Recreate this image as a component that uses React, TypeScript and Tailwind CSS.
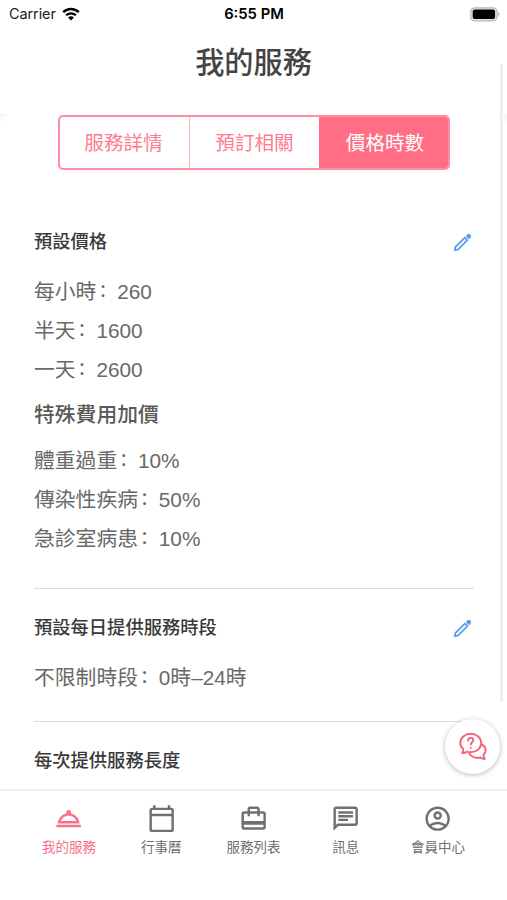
import { useState, type ReactNode } from "react";

interface TabItem {
  readonly label: string;
  readonly path: string;
}

const SEGMENTS = [
  { name: "服務詳情", cell: "w-[129px] pr-[2px]" },
  { name: "預訂相關", cell: "w-[130px] border-l" },
  { name: "價格時數", cell: "flex-1 pl-[3px]" },
];

const TABS: TabItem[] = [
  {
    label: "我的服務",
    path: "M2 17h20v2H2zm11.84-9.21c.1-.24.16-.51.16-.79 0-1.1-.9-2-2-2s-2 .9-2 2c0 .28.06.55.16.79C6.25 8.6 3.27 11.93 3 16h18c-.27-4.07-3.25-7.4-7.16-8.21zM12 9.58c2.95 0 5.47 1.83 6.5 4.41h-13c1.03-2.58 3.55-4.41 6.5-4.41z",
  },
  {
    label: "行事曆",
    path: "M20 3h-1V1h-2v2H7V1H5v2H4c-1.1 0-2 .9-2 2v16c0 1.1.9 2 2 2h16c1.1 0 2-.9 2-2V5c0-1.1-.9-2-2-2zm0 18H4V10h16v11zm0-13H4V5h16v3z",
  },
  {
    label: "服務列表",
    path: "M20 6h-3V4c0-1.11-.89-2-2-2H9c-1.11 0-2 .89-2 2v2H4c-1.11 0-2 .89-2 2v11c0 1.11.89 2 2 2h16c1.11 0 2-.89 2-2V8c0-1.11-.89-2-2-2zM9 4h6v2H9V4zm11 15H4v-2h16v2zm0-5H4V8h3v2h2V8h6v2h2V8h3v6z",
  },
  {
    label: "訊息",
    path: "M4 4h16v12H5.17L4 17.17V4m0-2c-1.1 0-1.99.9-1.99 2L2 22l4-4h14c1.1 0 2-.9 2-2V4c0-1.1-.9-2-2-2H4zm2 10h8v2H6v-2zm0-3h12v2H6V9zm0-3h12v2H6V6z",
  },
  {
    label: "會員中心",
    path: "M12 2C6.48 2 2 6.48 2 12s4.48 10 10 10 10-4.48 10-10S17.52 2 12 2zM7.07 18.28c.43-.9 3.05-1.78 4.93-1.78s4.51.88 4.93 1.78C15.57 19.36 13.86 20 12 20s-3.57-.64-4.93-1.72zm11.29-1.45c-1.43-1.74-4.9-2.33-6.36-2.33s-4.93.59-6.36 2.33C4.62 15.49 4 13.82 4 12c0-4.41 3.59-8 8-8s8 3.59 8 8c0 1.82-.62 3.49-1.64 4.83zM12 6c-1.94 0-3.5 1.56-3.5 3.5S10.06 13 12 13s3.5-1.56 3.5-3.5S13.94 6 12 6zm0 5c-.83 0-1.5-.67-1.5-1.5S11.17 8 12 8s1.5.67 1.5 1.5S12.83 11 12 11z",
  },
];

function StatusBar() {
  return (
    <div className="grid h-7 shrink-0 grid-cols-3 items-center pl-[9px] pr-[7px] font-['Inter',sans-serif] text-[14.5px] text-[#1c1c1c]">
      <div className="flex items-center gap-[6px]">
        <span className="tracking-[-0.1px]">Carrier</span>
        <svg className="h-[14px] w-[18px]" viewBox="0 0 18 14" fill="none">
          <path d="M1.2 5.1a11.2 11.2 0 0 1 15.6 0" stroke="#000" strokeWidth="2.5" />
          <path d="M4.1 8.3a7 7 0 0 1 9.8 0" stroke="#000" strokeWidth="2.3" />
          <path d="M9 13.6 6.1 10.6a4.2 4.2 0 0 1 5.8 0z" fill="#000" />
        </svg>
      </div>
      <span className="pr-px text-center text-[14.8px] font-semibold text-black">6:55 PM</span>
      <svg className="h-[15px] w-[30px] justify-self-end" viewBox="0 0 30 15" fill="none">
        <rect x="0.8" y="0.8" width="26.2" height="13" rx="4" fill="#e4e4e4" stroke="#b8b8b8" strokeWidth="1.2" />
        <rect x="2.7" y="2.6" width="22.4" height="9.4" rx="2" fill="#000" />
        <path d="M28.2 5c1.8.6 1.8 4 0 4.600z" fill="#b8b8b8" />
      </svg>
    </div>
  );
}

function EditButton() {
  return (
    <button type="button" aria-label="編輯" className="mr-[2px]">
      <svg className="size-[19px]" viewBox="0 0 20 20" fill="none" stroke="#5b9df0" strokeWidth="1.9" strokeLinejoin="round">
        <path d="M1.900 18.100 2.400 14.900 12.500 4.800 15.200 7.500 5.100 17.600z" />
        <path d="M14.700 3.200 15.800 2.100a1 1 0 0 1 1.400 0l.700.700a1 1 0 0 1 0 1.400L16.800 5.300z" fill="#5b9df0" />
      </svg>
    </button>
  );
}

function SectionHeader({ title, editable = true }: Readonly<{ title: string; editable?: boolean }>) {
  return (
    <div className="flex h-[30px] items-center justify-between">
      <h2 className="text-[18.3px] font-medium text-[#3a3a3a]">{title}</h2>
      {editable ? <EditButton /> : null}
    </div>
  );
}

function Row({ label, children }: Readonly<{ label: string; children: ReactNode }>) {
  return (
    <p className="flex h-[39px] items-center text-[20.8px] whitespace-nowrap">
      <span>{label}</span>
      {/* the SC face keeps the full-width colon on the left of its cell */}
      <span className="w-[20.8px] pb-[4px] pl-[2px] font-['Noto_Sans_CJK_SC',sans-serif] text-[18px]">：</span>
      <span>{children}</span>
    </p>
  );
}

function HelpButton() {
  return (
    <button
      type="button"
      aria-label="客服"
      className="absolute left-[445px] top-[719px] flex size-[55px] items-center justify-center rounded-full bg-white shadow-[0_1px_5px_rgba(0,0,0,0.28)]"
    >
      <svg className="size-[30px]" viewBox="0 0 30 30" fill="none" stroke="#f4637c" strokeWidth="1.900" strokeLinecap="round" strokeLinejoin="round">
        <path d="M5.2 17C3.300 15.400 2.300 13.400 2.300 11 2.300 5.800 6.800 1.800 12.700 1.800s10.500 4 10.500 9.200-4.700 9.300-10.500 9.300c-1.400 0-2.700-.200-3.900-.600-1.300 1-2.900 1.500-4.500 1.300.900-1.200 1.300-2.500.900-4z" />
        <path d="M24.200 12.600c2.100 1.300 3.400 3.200 3.400 5.600 0 1.900-.8 3.500-2.100 4.800 0 1.500.4 2.800 1.300 4-1.700 0-3.200-.5-4.400-1.500-4.700 1.300-9.500-.5-11.400-4.600" />
        <path d="M10.100 8.500c0-1.600 1.100-2.600 2.600-2.600s2.600 1 2.600 2.400c0 2-2.500 2.100-2.500 4.300M12.800 15.600v.2" />
      </svg>
    </button>
  );
}

export default function App() {
  const [segment, setSegment] = useState(2);
  const [tab, setTab] = useState(0);

  return (
    <div
      lang="zh-Hant"
      className="relative flex h-[900px] w-[507px] flex-col overflow-hidden bg-white font-['Liberation_Sans','Noto_Sans_CJK_TC',sans-serif] text-[#696969]"
    >
      <StatusBar />
      <header className="flex h-[86px] shrink-0 justify-center pt-[13px]">
        <h1 className="text-[29.2px] leading-[44px] font-medium text-[#444]">我的服務</h1>
      </header>

      <main className="min-h-0 flex-1 overflow-hidden bg-[#f7f7f7]">
        <div className="rounded-t-[10px] bg-white pt-px pr-[33px] pl-[34px]">
          <div className="ml-6 flex h-[55px] w-[392px] overflow-hidden rounded-[5px] border-2 border-[#ff8fa0]">
            {SEGMENTS.map(({ name, cell }, i) => (
              <button
                key={name}
                type="button"
                onClick={() => setSegment(i)}
                className={`border-[#ffb0bc] pt-[2px] text-[19.6px] ${cell} ${
                  i === segment ? "bg-[#ff6e85] text-white" : "text-[#ff7b90]"
                }`}
              >
                {name}
              </button>
            ))}
          </div>

          <section className="border-b border-[#ddd] pt-[57px] pb-[30px]">
            <SectionHeader title="預設價格" />
            <div className="pt-[15px]">
              <Row label="每小時">260</Row>
              <Row label="半天">1600</Row>
              <Row label="一天">2600</Row>
            </div>
            <h3 className="flex h-[52px] items-center text-[20.8px] font-medium text-[#5a5a5a]">特殊費用加價</h3>
            <Row label="體重過重">10%</Row>
            <Row label="傳染性疾病">50%</Row>
            <Row label="急診室病患">10%</Row>
          </section>

          <section className="border-b border-[#ddd] pt-[24px] pb-6">
            <SectionHeader title="預設每日提供服務時段" />
            <div className="pt-[15px]">
              <Row label="不限制時段">0時–24時</Row>
            </div>
          </section>

          <section className="pt-[24px] pb-10">
            <SectionHeader title="每次提供服務長度" editable={false} />
          </section>
        </div>
      </main>

      <nav className="flex h-[111px] shrink-0 border-t-2 border-[#efefef] bg-white px-[23px] pt-[13px]">
        {TABS.map(({ label, path }, i) => (
          <button
            key={label}
            type="button"
            onClick={() => setTab(i)}
            className={`flex flex-1 flex-col items-center ${i === tab ? "text-[#f9708a]" : "text-[#707070]"}`}
          >
            <svg className="size-[29.3px]" viewBox="0 0 24 24" fill="currentColor" aria-hidden>
              <path d={path} />
            </svg>
            <span className="mt-[5px] text-[13.5px] leading-5">{label}</span>
          </button>
        ))}
      </nav>

      <div className="absolute top-16 left-[500px] h-[638px] w-[3px] rounded-full bg-[#eee]" />
      <HelpButton />
    </div>
  );
}
